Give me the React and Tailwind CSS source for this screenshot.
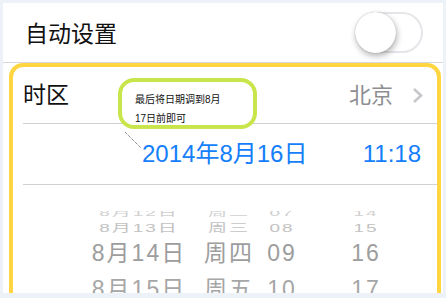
const cjk = { fontFamily: '"Liberation Sans", "Noto Sans CJK SC", sans-serif' };

function Toggle() {
    return (
        <div className="relative w-[68px] h-[41px] rounded-full border-2 border-[#e6e6ea] bg-white -mt-[1px]">
            <div className="absolute left-[-2px] top-[-2px] w-[41px] h-[41px] rounded-full bg-white shadow-[1px_3px_6px_rgba(0,0,0,0.3),0_0_1px_rgba(0,0,0,0.3)]" />
        </div>
    );
}

function PickerRow({ cells, className }) {
    return (
        <div className={"grid grid-cols-[112px_68px_38px_130px] pl-[70px] " + className}>
            {cells.map((c, i) => (
                <div key={i} className="text-center whitespace-nowrap">{c}</div>
            ))}
        </div>
    );
}

export default function App() {
    return (
        <div className="w-[446px] h-[298px] bg-[#edf1f8] pt-[3px] pl-[3px] pr-[3px] overflow-hidden" style={cjk}>
            <div className="relative bg-white h-[290px] overflow-hidden">
                <div className="h-[60px] flex items-center justify-between pl-[22px] pr-[20px] border-b border-[#d8d8dc]">
                    <span className="text-[23px] text-[#111] mt-[3px]">自动设置</span>
                    <Toggle />
                </div>

                <div className="ml-[6px] mr-[2px] border-[4px] border-[#ffd641] rounded-[14px] h-[300px]">
                    <div className="h-[57px] ml-[10px] flex items-center justify-between pr-[14px] border-b border-[#d0d0d4]">
                        <span className="text-[23px] text-[#111]">时区</span>
                        <div className="flex items-center gap-[19px]">
                            <span className="text-[22px] text-[#8e8e93]">北京</span>
                            <svg width="11" height="17" viewBox="0 0 11 17">
                                <polyline points="2,2 9,8.5 2,15" fill="none" stroke="#c7c7cc" strokeWidth="2.6" />
                            </svg>
                        </div>
                    </div>
                    <div className="h-[61px] ml-[10px] flex items-center justify-between pl-[119px] pr-[16px] border-b border-[#d0d0d4] text-[24px] text-[#147efb]">
                        <span>2014年8月16日</span>
                        <span>11:18</span>
                    </div>
                    <div className="text-[23px] tracking-[2px] leading-none">
                        <div className="mt-[26px] h-[6px] overflow-hidden">
                            <PickerRow className="-mt-[6px] h-[14px] text-[19px] text-[#d0d0d0] scale-y-[0.45]" cells={["8月12日", "周二", "07", "14"]} />
                        </div>
                        <PickerRow className="mt-[3px] h-[14px] text-[#c2c2c2] text-[19px] scale-y-[0.6]" cells={["8月13日", "周三", "08", "15"]} />
                        <PickerRow className="mt-[6px] h-[26px] leading-[26px] text-[#9d9d9d]" cells={["8月14日", "周四", "09", "16"]} />
                        <PickerRow className="mt-[10px] h-[26px] leading-[26px] text-[#a6a6a6]" cells={["8月15日", "周五", "10", "17"]} />
                    </div>
                </div>

                <svg className="absolute left-[121px] top-[128px]" width="20" height="20" viewBox="0 0 20 20">
                    <line x1="1" y1="1" x2="17" y2="17" stroke="#555" strokeWidth="1" strokeDasharray="1 1" />
                </svg>

                <div className="absolute left-[115px] top-[75px] w-[139px] h-[51px] bg-white border-[4px] border-[#c8e64c] rounded-[16px] pl-[13px] pt-[8px] text-[10px] leading-[19px] text-[#111]">
                    <div>最后将日期调到8月</div>
                    <div>17日前即可</div>
                </div>
            </div>
        </div>
    );
}
